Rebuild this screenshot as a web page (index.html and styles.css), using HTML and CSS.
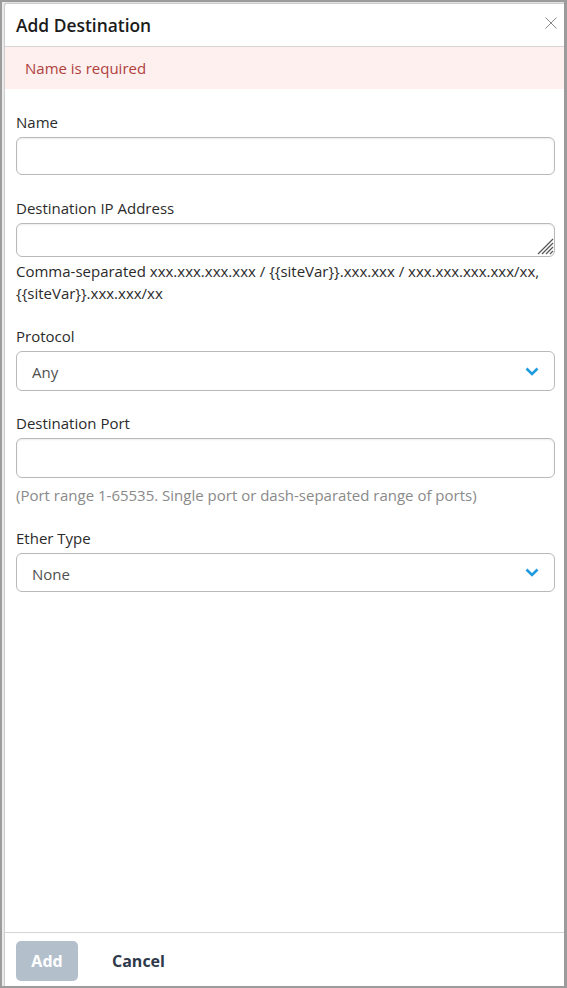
FILE: index.html
```html
<!DOCTYPE html>
<html lang="en">
<head>
<meta charset="utf-8">
<title>Add Destination</title>
<link rel="stylesheet" href="styles.css">
</head>
<body>
<div class="screen">
  <div class="backdrop">
    <div class="modal">
      <div class="modal-header">
        <h1 class="modal-title">Add Destination</h1>
        <button class="close" aria-label="Close">
          <svg width="12" height="12" viewBox="0 0 12 12"><path d="M0.5 0.5 L11.5 11.5 M11.5 0.5 L0.5 11.5" stroke="#8a8a8a" stroke-width="1" fill="none"/></svg>
        </button>
      </div>
      <div class="alert">Name is required</div>
      <div class="modal-body">
        <div class="field field-first">
          <label class="label">Name</label>
          <input class="input" type="text">
        </div>
        <div class="field">
          <label class="label">Destination IP Address</label>
          <div class="textarea-wrap">
            <textarea class="textarea"></textarea>
            <svg class="grip" width="17" height="17" viewBox="0 0 17 17"><path d="M16 1 L1 16 M16 5 L5 16 M16 9 L9 16 M16 13 L13 16" stroke="#555" stroke-width="1.2" fill="none"/></svg>
          </div>
          <div class="help">Comma-separated xxx.xxx.xxx.xxx / {{siteVar}}.xxx.xxx / xxx.xxx.xxx.xxx/xx, {{siteVar}}.xxx.xxx/xx</div>
        </div>
        <div class="field">
          <label class="label">Protocol</label>
          <div class="select">
            <span>Any</span>
            <svg width="14" height="9" viewBox="0 0 14 9"><path d="M1.5 1.5 L7 7 L12.5 1.5" stroke="#1f9be0" stroke-width="2.6" fill="none"/></svg>
          </div>
        </div>
        <div class="field">
          <label class="label">Destination Port</label>
          <input class="input input-port" type="text">
          <div class="hint">(Port range 1-65535. Single port or dash-separated range of ports)</div>
        </div>
        <div class="field">
          <label class="label">Ether Type</label>
          <div class="select select-ether">
            <span>None</span>
            <svg width="14" height="9" viewBox="0 0 14 9"><path d="M1.5 1.5 L7 7 L12.5 1.5" stroke="#1f9be0" stroke-width="2.6" fill="none"/></svg>
          </div>
        </div>
      </div>
      <div class="modal-footer">
        <button class="btn btn-primary" disabled>Add</button>
        <button class="btn btn-link">Cancel</button>
      </div>
    </div>
  </div>
</div>
</body>
</html>
```

FILE: styles.css
```css
html, body {
  margin: 0;
  padding: 0;
  height: 100%;
}
body {
  background: #9c9c9c;
  font-family: "Open Sans", "Noto Sans", sans-serif;
  color: #2b2b2b;
}
.screen {
  box-sizing: border-box;
  height: 988px;
  padding: 2px 3px 2px 2px;
  display: flex;
}
.backdrop {
  flex: 1;
  background: #ececec;
  padding: 1px 0 0 2px;
  display: flex;
}
.modal {
  flex: 1;
  background: #fff;
  border: 1px solid #cdcdcd;
  border-right: none;
  border-bottom: none;
  border-radius: 3px 0 0 0;
  display: flex;
  flex-direction: column;
  box-shadow: 0 -1px 2px rgba(0,0,0,0.06);
}
.modal-header {
  height: 42px;
  border-bottom: 1px solid #d4d4d4;
  display: flex;
  align-items: center;
  justify-content: space-between;
  padding: 0 7px 0 11px;
}
.modal-title {
  margin: 0;
  font-size: 17.4px;
  font-weight: 600;
  color: #1b1b1b;
  line-height: 24px;
}
.close {
  border: none;
  background: none;
  padding: 0;
  width: 12px;
  height: 12px;
  margin-bottom: 5px;
  display: flex;
}
.alert {
  background: #fdf0ef;
  color: #b0403d;
  font-size: 15px;
  line-height: 20px;
  padding: 11px 20px;
}
.modal-body {
  flex: 1;
  padding: 22px 9px 0 11px;
}
.field {
  margin-bottom: 21px;
}
.field-first {
  margin-bottom: 22px;
}
.label {
  display: block;
  font-size: 15px;
  line-height: 20px;
  color: #2b2b2b;
  margin-bottom: 6px;
  padding-top: 1px;
}
.input, .textarea {
  display: block;
  box-sizing: border-box;
  width: 100%;
  border: 1px solid #b9b9b9;
  border-radius: 6px;
  box-shadow: inset 0 1px 2px rgba(0,0,0,0.08);
  font-family: inherit;
  font-size: 15px;
  margin: 0;
  background: #fff;
}
.input {
  height: 38px;
  margin-top: -1px;
}
.input-port {
  height: 40px;
}
.textarea-wrap {
  position: relative;
  margin-top: -1px;
}
.textarea {
  height: 34px;
  resize: none;
}
.grip {
  position: absolute;
  right: 1px;
  bottom: 2px;
  pointer-events: none;
}
.help {
  font-size: 15px;
  line-height: 22px;
  color: #2b2b2b;
  margin-top: 3px;
}
.hint {
  font-size: 15px;
  line-height: 22px;
  color: #8a8a8a;
  margin-top: 6px;
}
.select {
  box-sizing: border-box;
  height: 40px;
  border: 1px solid #b9b9b9;
  border-radius: 6px;
  display: flex;
  align-items: center;
  justify-content: space-between;
  padding: 0 15px 0 15px;
  font-size: 15px;
  color: #505050;
  margin-top: -1px;
}
.select span {
  margin-top: 2px;
}
.select-ether {
  height: 39px;
}
.modal-footer {
  border-top: 1px solid #d4d4d4;
  padding: 8px 11px 5px;
  display: flex;
  align-items: center;
  gap: 16px;
}
.btn {
  font-family: inherit;
  font-size: 16px;
  font-weight: 700;
  border: none;
  border-radius: 5px;
  height: 40px;
  cursor: pointer;
}
.btn-primary {
  background: #b4bfcc;
  color: #fff;
  width: 62px;
}
.btn-link {
  background: none;
  color: #2e3a4b;
  padding: 0 18px;
}
```
